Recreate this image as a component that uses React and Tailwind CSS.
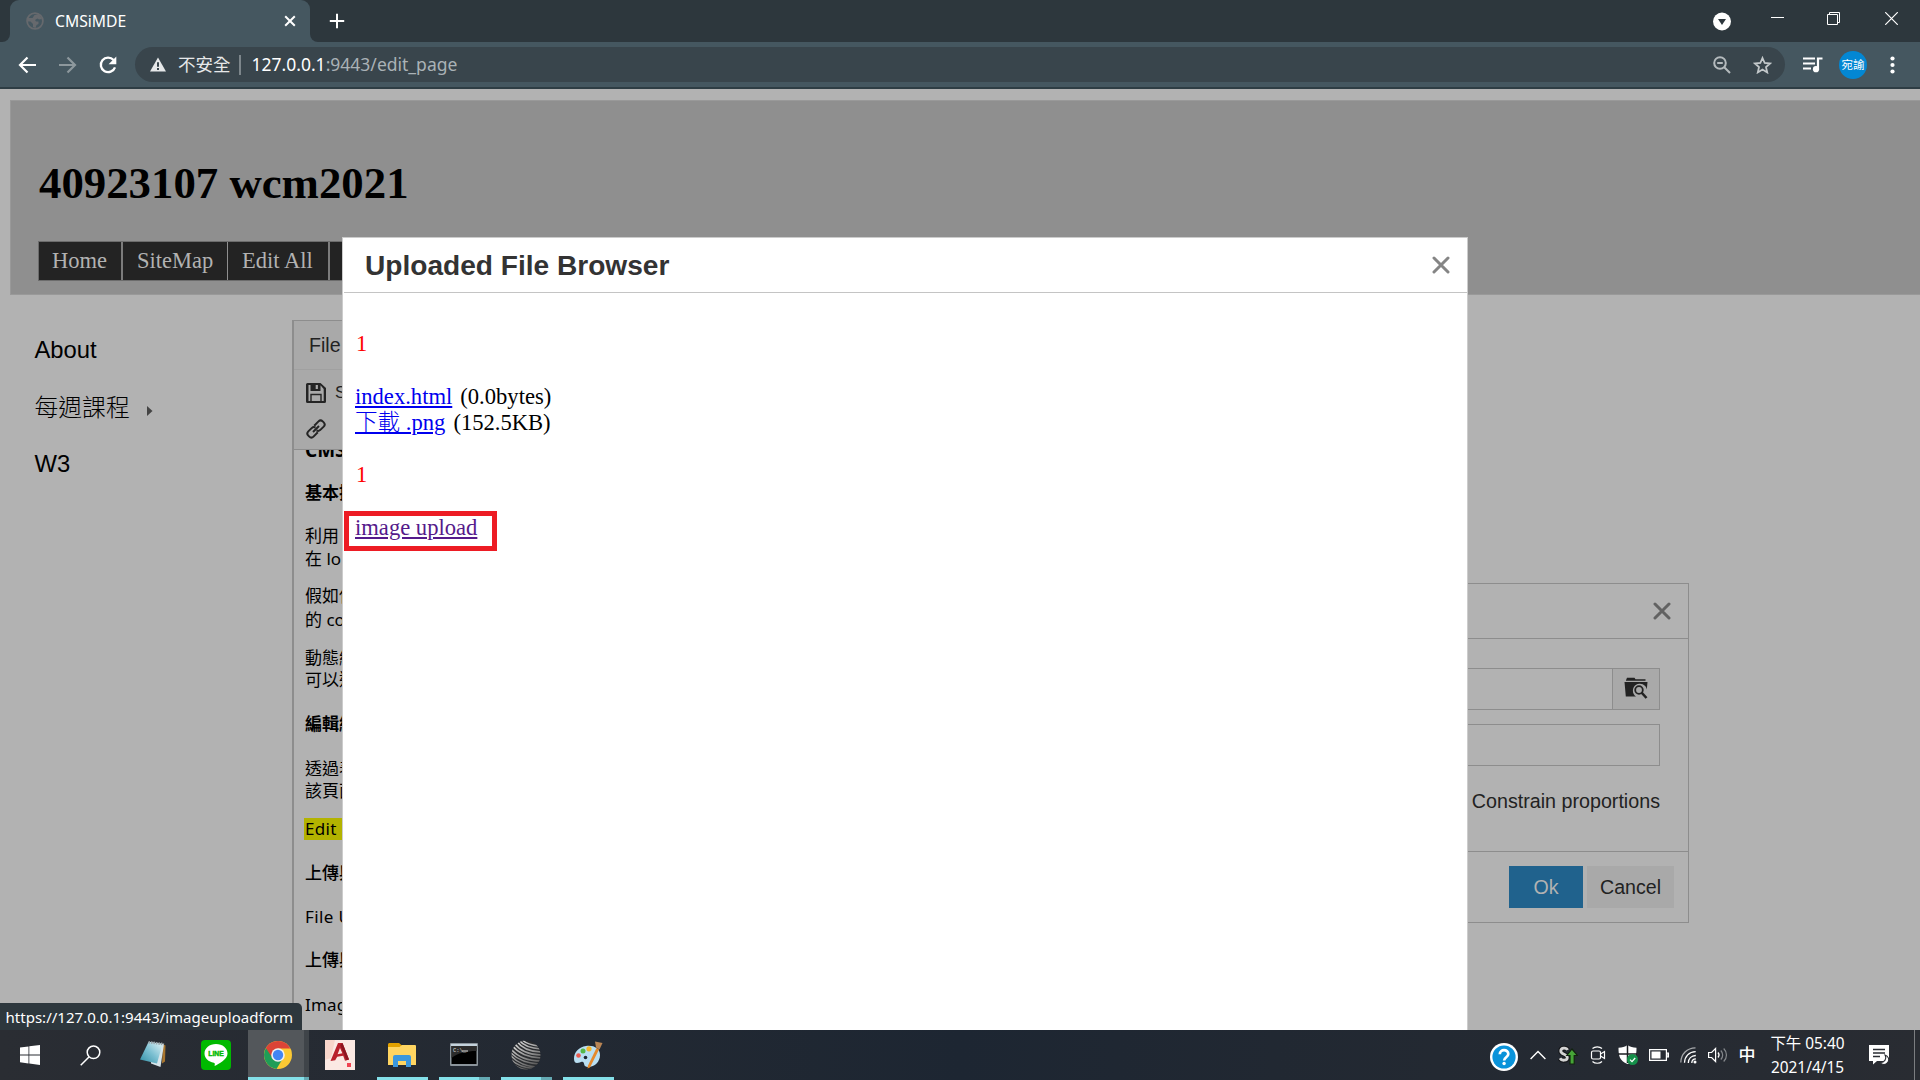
import React from "react";

function BrowserTabs() {
  return (
    <div className="flex h-[42px] items-start bg-[#2d373d]">
      <div className="flex h-[42px] w-[10px] shrink-0 items-end bg-[#455760]">
        <div className="h-full w-full rounded-br-[8px] bg-[#2d373d]" />
      </div>
      <div className="flex h-[42px] w-[300px] shrink-0 items-center rounded-t-[9px] bg-[#455760] pl-[16px] pr-[14px] text-white">
        <svg width="18" height="18" viewBox="0 0 18 18" fill="none">
          <circle cx="9" cy="9" r="7.9" stroke="#66696d" strokeWidth="1.8" />
          <path d="M2 6h4.500l2-3 4.500-1 3 5-3 .5-1.500-1L9 8l1 1.500h2.500v2.500l-2 1-1 3-2.500-1v-3L4.500 9.500H1.500z" fill="#66696d" />
        </svg>
        <span className='ml-[11px] text-[15.7px] leading-[22px] font-["Noto_Sans",sans-serif]'>CMSiMDE</span>
        <svg className="ml-auto" width="12" height="12" viewBox="0 0 12 12" stroke="#fff" strokeWidth="2">
          <path d="M1.200 1.200l9.600 9.600M10.800 1.200l-9.600 9.600" />
        </svg>
      </div>
      <div className="h-[42px] w-[10px] shrink-0 bg-[#455760]">
        <div className="h-full w-full rounded-bl-[8px] bg-[#2d373d]" />
      </div>
      <svg className="ml-[9px] mt-[13px]" width="16" height="16" viewBox="0 0 16 16" stroke="#fff" strokeWidth="2">
        <path d="M8 .8v14.400M.8 8h14.400" />
      </svg>
      <div className="ml-auto flex items-start pr-[22px]">
        <svg className="mt-[12px]" width="20" height="20" viewBox="0 0 20 20">
          <circle cx="10" cy="9.500" r="9" fill="#fff" />
          <path d="M6 7h8l-4 6z" fill="#2d373d" />
        </svg>
        <svg className="ml-[39px] mt-[12px]" width="13" height="13" viewBox="0 0 13 13" stroke="#fff">
          <path d="M0 5.500h13" />
        </svg>
        <svg className="ml-[43px] mt-[12px]" width="13" height="13" viewBox="0 0 13 13" fill="none" stroke="#fff">
          <path d="M.5 2.500h10v10H.5zM2.500 2.500v-2h10v10h-2" />
        </svg>
        <svg className="ml-[45px] mt-[12px]" width="13" height="13" viewBox="0 0 13 13" stroke="#fff" strokeWidth="1.200">
          <path d="M.2 .2l12.600 12.600M12.800 .2L.2 12.800" />
        </svg>
      </div>
    </div>
  );
}

function AddressBar() {
  return (
    <div className="flex h-[47px] items-start border-b-2 border-[#2e3d44] bg-[#455760] pt-[5px]">
      <div className="flex h-[35px] w-[135px] shrink-0 items-center pl-[18px]">
        <svg width="19" height="18" viewBox="0 0 19 18" fill="none" stroke="#fff" strokeWidth="2.200">
          <path d="M18 9H2.500M9.500 1.500L2 9l7.500 7.500" />
        </svg>
        <svg className="ml-[21px]" width="19" height="18" viewBox="0 0 19 18" fill="none" stroke="#8d989d" strokeWidth="2.200">
          <path d="M1 9h15.500M9.500 1.500L17 9l-7.500 7.500" />
        </svg>
        <svg className="ml-[21px]" width="20" height="20" viewBox="0 0 20 20">
          <path d="M15.600 5A7.300 7.300 0 1 0 17 12.300" fill="none" stroke="#fff" strokeWidth="2.300" />
          <path d="M18.300 1.500v7.700h-7.700z" fill="#fff" />
        </svg>
      </div>
      <div className='flex h-[35px] w-[1650px] shrink-0 items-center rounded-full bg-[#39454c] pl-[15px] pr-[14px] font-["Noto_Sans","Noto_Sans_CJK_TC",sans-serif]'>
        <svg width="16" height="15" viewBox="0 0 16 15">
          <path d="M8 .5l8 14H0z" fill="#e6e8e9" />
          <path d="M8 5.200v4.600M8 11v2" stroke="#39454c" strokeWidth="2" />
        </svg>
        <span className="mb-[2px] ml-[12px] text-[17.5px] leading-[26px] text-[#e6e8e9]">不安全</span>
        <span className="ml-[8px] h-[20px] w-[2px] bg-[#7d868b]" />
        <span className="mb-[2px] ml-[11px] text-[17.5px] leading-[26px] text-[#aab2b6]">
          <span className="text-white">127.0.0.1</span>:9443/edit_page
        </span>
        <svg className="ml-auto" width="18" height="18" viewBox="0 0 18 18" fill="none" stroke="#b4babd" strokeWidth="2">
          <circle cx="7" cy="7" r="5.800" />
          <path d="M11 11l6 6M4.200 7h5.600" />
        </svg>
        <svg className="ml-[22px] -mr-px" width="19" height="18" viewBox="0 0 19 18" fill="none" stroke="#c3c8ca" strokeWidth="1.800">
          <path d="M9.500 2l2.200 5 5.400.5-4.100 3.600 1.200 5.300-4.700-2.800-4.700 2.800L6 11.100 1.900 7.500 7.300 7z" />
        </svg>
      </div>
      <div className="flex h-[35px] flex-1 items-center pl-[18px]">
        <svg width="20" height="16" viewBox="0 0 20 16">
          <path d="M0 1.500h12M0 6.500h12M0 11.500h8" stroke="#fff" strokeWidth="2" />
          <path d="M15 12V1.500h4.500" fill="none" stroke="#fff" strokeWidth="2.200" />
          <circle cx="13" cy="12.200" r="3.100" fill="#fff" />
        </svg>
        <div className='ml-[16px] flex h-[28px] w-[28px] items-center justify-center rounded-full bg-[#0387d3] text-[11.5px] leading-none text-white font-["Noto_Sans_CJK_TC",sans-serif]'>
          宛諭
        </div>
        <svg className="ml-[23px]" width="5" height="18" viewBox="0 0 5 18" fill="#fff">
          <circle cx="2.500" cy="2.500" r="2.100" />
          <circle cx="2.500" cy="9" r="2.100" />
          <circle cx="2.500" cy="15.500" r="2.100" />
        </svg>
      </div>
    </div>
  );
}

function SiteHeader() {
  return (
    <header className='ml-[10px] h-[195px] border border-r-0 border-[#999] bg-[#8f8f8f] pl-[27px] pt-[56px] font-["Liberation_Serif",serif]'>
      <h1 className="pl-px text-[44.8px] font-bold leading-[52px] text-black">40923107 wcm2021</h1>
      <nav className="mt-[32px] flex h-[40px] w-[330px] overflow-hidden border-y border-l border-[#6c6c6c] bg-[#232323] text-[22.5px] leading-[38px] text-[#b2b2b2]">
        <a className="w-[84px] shrink-0 border-r-2 border-[#7c7c7c] pl-[13px]">Home</a>
        <a className="w-[105px] shrink-0 border-r border-[#8f8f8f] pl-[14px]">SiteMap</a>
        <a className="w-[102px] shrink-0 border-r-2 border-[#7c7c7c] pl-[14px]">Edit All</a>
      </nav>
    </header>
  );
}

const docLines = [
  { t: "基本操", c: "mt-[21px] font-bold" },
  { t: "利用", c: "mt-[21px]" },
  { t: "在 lo", c: "mt-[1px]" },
  { t: "假如使", c: "mt-[15px]" },
  { t: "的 co", c: "mt-[2px]" },
  { t: "動態網", c: "mt-[16px]" },
  { t: "可以透", c: "mt-0" },
  { t: "編輯網", c: "mt-[22px] font-bold" },
  { t: "透過表", c: "mt-[23px]" },
  { t: "該頁面", c: "mt-0" },
  { t: "Edit", c: "mt-[16px] -ml-px pl-px bg-[#b3b300] tracking-[0.3px]" },
  { t: "上傳與", c: "mt-[22px] font-medium" },
  { t: "File U", c: "mt-[22px] tracking-[0.4px]" },
  { t: "上傳與", c: "mt-[21px] font-medium" },
  { t: "Imag", c: "mt-[23px] tracking-[0.2px]" },
];

function Editor() {
  return (
    <section className='mt-[25px] flex w-[60px] flex-col overflow-hidden border-l-2 border-t-[1.5px] border-[#8d8d8d] text-[#222] font-["Liberation_Sans",Arial,sans-serif]'>
      <div className="h-[49px] shrink-0 whitespace-nowrap border-b border-[#a0a0a0] bg-[#a9a9a9] pl-[15px] text-[19.6px] leading-[49px]">
        File
      </div>
      <div className="h-[80px] shrink-0 border-b-[1.5px] border-[#8d8d8d] bg-[#a9a9a9] pl-[12px] pt-[12px]">
        <div className="flex h-[21px] items-center whitespace-nowrap text-[17px] leading-[21px]">
          <svg className="shrink-0" width="20" height="20" viewBox="0 0 20 20">
            <path d="M1.500 0h13L20 5v13.500A1.500 1.500 0 0 1 18.500 20h-17A1.500 1.500 0 0 1 0 18.500v-17A1.500 1.500 0 0 1 1.500 0z" fill="#242424" />
            <path d="M2.500 2v16h1.800v-7.200h11.400V18h2V6L14.500 2.300V8H4.500V2z" fill="#a9a9a9" />
            <path d="M5.500 0h8v7.300h-8z" fill="#242424" />
            <path d="M9.700 2h2.200v4H9.700zM5.700 12.200h8.600V18H5.700z" fill="#a9a9a9" />
          </svg>
          <span className="ml-[9px]">S</span>
        </div>
        <svg className="mt-[16px]" width="20" height="20" viewBox="0 0 20 20" fill="none" stroke="#242424" strokeWidth="2">
          <path d="M8.200 6.700l4.300-4.300a3 3 0 0 1 4.200 0l1 1a3 3 0 0 1 0 4.200l-3.600 3.500a3 3 0 0 1-3.600.3" />
          <path d="M11.800 13.300l-4.300 4.300a3 3 0 0 1-4.200 0l-1-1a3 3 0 0 1 0-4.200l3.600-3.500a3 3 0 0 1 3.600-.3" />
          <path d="M7 13l6-6" />
        </svg>
      </div>
      <div className='flex-1 overflow-hidden pl-[11px] text-[17px] text-black font-["Noto_Sans","Noto_Sans_CJK_TC",sans-serif]'>
        <div className="-mt-[11px] h-[22px] whitespace-nowrap text-[19px] font-bold leading-[22px]">CMS</div>
        {docLines.map((l, i) => (
          <div key={i} className={"h-[22px] whitespace-nowrap leading-[22px] " + l.c}>
            {l.t}
          </div>
        ))}
      </div>
    </section>
  );
}

function PageBody() {
  return (
    <div className="flex min-h-0 flex-1">
      <aside className='w-[292px] shrink-0 pl-[34.5px] pt-[41px] text-[23.8px] leading-[28px] text-black font-["Liberation_Sans","Noto_Sans_CJK_TC",sans-serif]'>
        <div>About</div>
        <div className="mt-[26px] flex h-[35px] items-center font-light">
          每週課程
          <svg className="ml-[17px] mt-[7px]" width="6" height="10" viewBox="0 0 6 10">
            <path d="M0 0l5.500 5L0 10z" fill="#444" />
          </svg>
        </div>
        <div className="mt-[25px]">W3</div>
      </aside>
      <Editor />
    </div>
  );
}

function CloseMark({ color }) {
  return (
    <svg className="shrink-0" width="18" height="18" viewBox="0 0 18 18" fill="none" stroke={color} strokeWidth="3" strokeLinecap="round">
      <path d="M2 2l14 14M16 2L2 16" />
    </svg>
  );
}

function ImageDialog() {
  return (
    <div className='absolute left-[1200px] top-[583px] flex h-[340px] w-[489px] flex-col border-[1.5px] border-[#8d8d8d] bg-[#b2b2b2] text-[19.6px] text-[#222] font-["Liberation_Sans",Arial,sans-serif]'>
      <div className="flex h-[55px] shrink-0 items-center justify-end border-b border-[#8d8d8d] pr-[17px]">
        <CloseMark color="#626262" />
      </div>
      <div className="flex flex-1 flex-col pl-[28px] pr-[28px] pt-[29px]">
        <div className="flex h-[42px] border border-[#8d8d8d]">
          <div className="flex-1" />
          <div className="flex w-[47px] items-center justify-center border-l border-[#8d8d8d] bg-[#a9a9a9] pb-[2px]">
            <svg width="24" height="23" viewBox="0 0 24 23">
              <path d="M2 3.200L3 .8h7.500l1 1.400h10v1.600H2zM.5 5h23l-.7 7.500A7 7 0 1 0 12 19.500H1.800z" fill="#222" />
              <circle cx="15" cy="13" r="3.800" fill="none" stroke="#222" strokeWidth="1.800" />
              <path d="M17.500 15.500l5 5.500" stroke="#222" strokeWidth="2.600" />
            </svg>
          </div>
        </div>
        <div className="mt-[14px] h-[42px] border border-[#8d8d8d]" />
        <div className="mt-[20px] text-right text-[19.7px] leading-[30px]">Constrain proportions</div>
      </div>
      <div className="flex h-[71px] shrink-0 justify-end gap-[4px] border-t-[1.5px] border-[#8d8d8d] pr-[14px] pt-[14px] leading-[42px]">
        <div className="h-[42px] w-[74px] bg-[#20628d] text-center text-[#b2b2b2]">Ok</div>
        <div className="h-[42px] w-[87px] bg-[#a9a9a9] text-center">Cancel</div>
      </div>
    </div>
  );
}

function FileBrowser() {
  return (
    <div className="absolute left-[342px] top-[237px] flex h-[793px] w-[1126px] flex-col border border-b-0 border-[#ccc] bg-white pl-px">
      <div className="flex h-[55px] shrink-0 items-center justify-between border-b border-[#c4c4c4] pl-[21px] pr-[17.5px]">
        <h2 className='pt-[2px] text-[28.1px] font-bold leading-[36px] text-[#333] font-["Liberation_Sans",Arial,sans-serif]'>
          Uploaded File Browser
        </h2>
        <CloseMark color="#858585" />
      </div>
      <div className='pl-[11px] pt-[38px] text-[22.6px] leading-[26px] text-black font-["Liberation_Serif","Noto_Sans_CJK_TC",serif]'>
        <p className="pl-px text-[#f00]">1</p>
        <p className="mt-[27px]">
          <a className="text-[#00e] underline">index.html</a>
          <span className="ml-[8px]">(0.0bytes)</span>
        </p>
        <p className="h-[26px]">
          <a className="font-light text-[#00e] underline">下載 .png</a>
          <span className="ml-[8px]">(152.5KB)</span>
        </p>
        <p className="mt-[26px] pl-px text-[#f00]">1</p>
        <p className="mt-[27px]">
          <a className="text-[#551a8b] underline">image upload</a>
        </p>
      </div>
      <div className="absolute left-[1px] top-[273px] h-[40px] w-[153px] border-[5px] border-[#ed1c24]" />
    </div>
  );
}

function TaskButton({ children, active, line, split }) {
  return (
    <div className="flex h-full w-[62px] shrink-0 flex-col items-center">
      <div className={"flex h-[47px] items-center justify-center " + (active ? "w-[61px] border-r-[5px] border-[#3f4449] bg-[#53575b]" : "w-[51px]")}>
        {children}
      </div>
      {line && (
        <div className={"flex h-[3px] bg-[#84e0e9] " + (active ? "w-[61px]" : "w-[51px]")}>
          {split && <div className={"ml-auto h-full bg-[#64a9b2] " + (active ? "w-[5px]" : "w-[11px]")} />}
        </div>
      )}
    </div>
  );
}

function Cell({ w, children }) {
  return (
    <div className="flex h-full shrink-0 items-center justify-center" style={{ width: w }}>
      {children}
    </div>
  );
}

function Taskbar() {
  return (
    <div className='flex h-[50px] shrink-0 items-center bg-linear-to-r from-[#2a2d33] via-[#1d2632] to-[#292c32] text-white font-["Noto_Sans","Noto_Sans_CJK_TC",sans-serif]'>
      <Cell w={60}>
        <svg width="20" height="20" viewBox="0 0 20 20" fill="#fff">
          <path d="M0 2.600l8.500-1.100v8H0zM9.300 1.300L20 0v9.500H9.300zM0 10.400h8.500v8L0 17.300zM9.300 10.400H20V20L9.300 18.600z" />
        </svg>
      </Cell>
      <Cell w={63}>
        <svg className="mr-[2px]" width="21" height="21" viewBox="0 0 21 21" fill="none" stroke="#fff" strokeWidth="1.500">
          <circle cx="13.500" cy="7.300" r="6.300" />
          <path d="M9 12L.7 20.300" />
        </svg>
      </Cell>
      <TaskButton>
        <svg className="mr-[2px]" width="30" height="28" viewBox="0 0 30 28">
          <defs>
            <linearGradient id="np" x1="0" y1="1" x2="1" y2="0">
              <stop offset="0" stopColor="#2f8da3" />
              <stop offset=".5" stopColor="#7cc0d2" />
              <stop offset="1" stopColor="#e5f4f7" />
            </linearGradient>
          </defs>
          <path d="M25 4l2.500 1.500-.5 16-3 2z" fill="#a9762f" />
          <path d="M12 2l14 2-3.500 23L13 23.500z" fill="#d7e5ea" />
          <path d="M10.500 2l14 2-5.500 19.500L2 19.500z" fill="url(#np)" />
          <path d="M10.500 2.200l15.500 2" stroke="#99a5aa" strokeWidth="2.500" strokeDasharray="1.500 1" />
        </svg>
      </TaskButton>
      <TaskButton>
        <svg className="mt-[3px]" width="30" height="30" viewBox="0 0 30 30">
          <rect width="30" height="30" rx="4" fill="#00b900" />
          <path d="M15 4C8.400 4 3.500 8.200 3.500 13.500c0 4.700 4 8.400 9.300 9.200 1.500.3 1 1.500.8 3.300 4-2 12.900-6.500 12.900-12.500C26.500 8.200 21.600 4 15 4z" fill="#fff" />
          <text x="15" y="16.400" textAnchor="middle" fontSize="6.800" fontWeight="bold" fill="#00b900" stroke="#00b900" strokeWidth=".4" fontFamily="Liberation Sans">LINE</text>
        </svg>
      </TaskButton>
      <TaskButton active line split>
        <svg className="ml-[4px] mt-[3px]" width="28" height="28" viewBox="0 0 28 28">
          <circle cx="14" cy="14" r="14" fill="#fbc934" />
          <path d="M14 14L1.900 7A14 14 0 0 0 12.500 27.900L18.500 18z" fill="#1f9d57" />
          <path d="M14 7.500h12.400A14 14 0 0 0 1.900 7l5.800 9z" fill="#db4437" />
          <circle cx="14" cy="14" r="6.800" fill="#f1f1f1" />
          <circle cx="14" cy="14" r="5.200" fill="#4285f4" />
        </svg>
      </TaskButton>
      <TaskButton>
        <svg className="mt-[3px]" width="30" height="30" viewBox="0 0 30 30">
          <rect width="30" height="30" fill="#fbe9e3" />
          <path d="M0 0h10L6 18 0 20z" fill="#f8d5ca" />
          <path d="M13 3h4.500l6.500 16.500-4 1.200-1.800-5-6 1-2 3.500-4.700.8zM15 8l-2.400 6.200 4.800-.9z" fill="#b9202b" />
          <path d="M17.500 3L24 19.500l-2.500.7L15.200 5z" fill="#8c1620" />
          <rect x="22" y="23" width="4" height="4" fill="#f04452" />
        </svg>
      </TaskButton>
      <TaskButton line>
        <svg className="mt-[3px]" width="28" height="24" viewBox="0 0 28 24">
          <path d="M0 1.500C0 .7.700 0 1.500 0H11l3 2.500V4H0z" fill="#e2a100" />
          <path d="M0 4h11.500L14 2h13a1 1 0 0 1 1 1v19H0z" fill="#ffd561" />
          <path d="M5 24V14a2 2 0 0 1 2-2h14a2 2 0 0 1 2 2v10h-5v-6h-8v6z" fill="#3b97dd" />
        </svg>
      </TaskButton>
      <TaskButton line split>
        <svg className="mt-[2px]" width="28" height="23" viewBox="0 0 28 23">
          <rect width="28" height="23" rx="1" fill="#8b949b" />
          <rect x="1" y="1" width="26" height="2" fill="#c4d2dc" />
          <rect x="1.500" y="3" width="25" height="18" fill="#000" />
          <path d="M1.500 3h25v5C16 8 8 10 1.500 15z" fill="#2b2b2b" />
          <text x="3" y="8.500" fontSize="5.500" fill="#ddd" fontFamily="Liberation Mono">C:\_</text>
          <path d="M12 8h6" stroke="#ddd" />
        </svg>
      </TaskButton>
      <TaskButton line split>
        <svg className="mt-[3px]" width="30" height="30" viewBox="0 0 30 30">
          <defs>
            <clipPath id="ball"><circle cx="15" cy="15" r="14.500" /></clipPath>
            <linearGradient id="bg" x1="0" y1="0" x2="0.6" y2="1">
              <stop offset="0" stopColor="#eee" />
              <stop offset="1" stopColor="#555" />
            </linearGradient>
          </defs>
          <g clipPath="url(#ball)">
            <rect width="30" height="30" fill="#2a2c2f" />
            <path
              d="M11 0q6 5 17 6M8 0q6 8 22 9M5.500 1q8 11 25 11M3 3q9 12 28 12M1 5.500q10 12 30 12.500M0 9q10 12 30 12M-1 12q10 11 29 12M-1 15q10 11 26 12M-1 18.500q8 9 24 10M-1 22q6 6 18 8"
              fill="none"
              stroke="url(#bg)"
              strokeWidth="1.500"
            />
          </g>
        </svg>
      </TaskButton>
      <TaskButton line>
        <svg className="mt-[3px]" width="30" height="30" viewBox="0 0 30 30">
          <path d="M13 6C6 7 1 12 1 18.500c0 3 1 4.500 3 4.500 3 0 4-2 6-1s0 5 5 5c7 0 12-5.500 12-12S21 5 13 6z" fill="#b9dff2" />
          <circle cx="5.500" cy="15.500" r="2.300" fill="#ea5a4e" />
          <circle cx="10" cy="11" r="2.500" fill="#55b848" />
          <circle cx="16" cy="8.800" r="2.600" fill="#f4b52b" />
          <circle cx="12.500" cy="17.500" r="1.800" fill="#1d2632" />
          <path d="M23.500 8l2.500 1.500L17 27.500l-2.500 1 .5-3z" fill="#e58a2c" />
          <path d="M22 1.500l7.500 1.500-3 6.500-3.500-2z" fill="#b98554" />
        </svg>
      </TaskButton>

      <div className="ml-auto flex h-full items-center">
        <Cell w={36}>
          <svg className="mt-[3px]" width="28" height="28" viewBox="0 0 28 28">
            <circle cx="14" cy="14" r="14" fill="#fff" />
            <circle cx="14" cy="14" r="11.600" fill="#0a93da" />
            <path d="M9.800 11.200c0-5.400 8.500-5.300 8.500-.2 0 3.200-4.200 3.300-4.200 6.500" fill="none" stroke="#fff" strokeWidth="2.700" />
            <circle cx="14.100" cy="20.500" r="1.700" fill="#fff" />
          </svg>
        </Cell>
        <Cell w={32}>
          <svg width="16" height="10" viewBox="0 0 16 10" fill="none" stroke="#fff" strokeWidth="1.400">
            <path d="M.6 9L8 1.500 15.400 9" />
          </svg>
        </Cell>
        <Cell w={28}>
          <svg width="20" height="20" viewBox="0 0 20 20">
            <path d="M9.500 5C8.500 2.500 2.800 2.300 2.800 6c0 4 6.500 2.500 6.500 6.500 0 3.500-5.800 3.500-7.300.8" fill="none" stroke="#15171a" strokeWidth="5" />
            <path d="M9.500 5C8.500 2.500 2.800 2.300 2.800 6c0 4 6.500 2.500 6.500 6.500 0 3.500-5.800 3.500-7.300.8" fill="none" stroke="#d4d4d4" strokeWidth="2.800" />
            <path d="M14 4l5.500 6.500h-3.300V19H12v-8.500H8.800z" fill="#46a537" stroke="#12240f" strokeWidth="1.200" />
          </svg>
        </Cell>
        <Cell w={32}>
          <svg width="16" height="18" viewBox="0 0 16 18" fill="none" stroke="#fff" strokeWidth="1.200">
            <rect x="1.500" y="5" width="9" height="8" rx="1.500" />
            <path d="M10.500 8l4-2.500v7l-4-2.500M2.500 2.500C5 .2 9.500.2 12 2.500M2.500 15.500c2.500 2.300 7 2.300 9.500 0" />
          </svg>
        </Cell>
        <Cell w={29}>
          <svg className="mr-px" width="20" height="20" viewBox="0 0 20 20">
            <path d="M9.500 0C7 2 4 2.700.5 2.700c0 8 1 13 9 16.300 8-3.300 9-8.300 9-16.300C15 2.700 12 2 9.500 0z" fill="#fff" />
            <path d="M9.500 0v18M0 9h19" stroke="#1b1e22" strokeWidth="1.500" />
            <circle cx="14.500" cy="14.500" r="5.500" fill="#15904a" />
            <path d="M12 14.600l2 2 3.200-3.600" fill="none" stroke="#fff" strokeWidth="1.300" />
          </svg>
        </Cell>
        <Cell w={31}>
          <svg width="20" height="12" viewBox="0 0 20 12">
            <path d="M.6.600h16.800v10.800H.6zM18 4h1.500v4H18z" fill="none" stroke="#fff" strokeWidth="1.200" />
            <path d="M2.500 2.500h9v7h-9z" fill="#fff" />
          </svg>
        </Cell>
        <Cell w={30}>
          <svg className="mr-px" width="17" height="17" viewBox="0 0 17 17" fill="none" strokeWidth="1.300">
            <path d="M.8 15.500C1 7 7 1 15.500.8" stroke="#a6a8ab" />
            <path d="M4.500 15.800C4.700 9.300 9 4.800 15.700 4.600" stroke="#fff" />
            <path d="M8.300 15.900c.1-4.200 3-7.200 7.500-7.400" stroke="#fff" />
            <path d="M11.800 16c0-2.400 1.600-4 4.100-4.100" stroke="#fff" />
            <circle cx="15" cy="15" r="1.500" fill="#fff" stroke="none" />
          </svg>
        </Cell>
        <Cell w={29}>
          <svg className="mr-px" width="20" height="16" viewBox="0 0 20 16" fill="none" strokeWidth="1.200">
            <path d="M.6 5.500h3l4-4v13l-4-4h-3z" stroke="#fff" />
            <path d="M10 5.500c1.300 1.500 1.300 3.500 0 5" stroke="#fff" />
            <path d="M12.800 3.500c2.500 2.600 2.500 6.400 0 9M15.700 1.500c3.700 3.800 3.700 9.200 0 13" stroke="#85888c" />
          </svg>
        </Cell>
        <Cell w={28}>
          <span className="text-[17px] font-medium leading-[20px]">中</span>
        </Cell>
        <Cell w={93}>
          <div className="text-center text-[15.4px] leading-[23px]">
            <div>下午 05:40</div>
            <div className="pt-px">2021/4/15</div>
          </div>
        </Cell>
        <Cell w={50}>
          <svg width="20" height="20" viewBox="0 0 20 20">
            <path d="M0 0h20v16H8l-4 3.500V16H0z" fill="#fff" />
            <path d="M4 4.500h12M4 8h12M4 11.500h7" stroke="#2a2d33" strokeWidth="1.300" />
            <path d="M16 10a5 5 0 0 1-5 7.500 4.800 4.800 0 1 0 5-7.500z" fill="#fff" stroke="#2a2d33" strokeWidth="1.100" />
          </svg>
        </Cell>
        <div className="ml-[10px] mr-[5px] h-full w-px bg-[#7b7d80]" />
      </div>
    </div>
  );
}

export default function App() {
  return (
    <div className="relative flex h-[1080px] w-[1920px] flex-col overflow-hidden bg-[#b2b2b2]">
      <BrowserTabs />
      <AddressBar />
      <main className="flex min-h-0 flex-1 flex-col overflow-hidden bg-[#b2b2b2] pt-[11px]">
        <SiteHeader />
        <PageBody />
      </main>
      <Taskbar />
      <ImageDialog />
      <FileBrowser />
      <div className='absolute left-0 top-[1003px] h-[27px] w-[302px] rounded-tr-[5px] bg-[#2d373d] pl-[5.5px] text-[15.05px] leading-[28px] text-white font-["Noto_Sans",sans-serif]'>
        https://127.0.0.1:9443/imageuploadform
      </div>
    </div>
  );
}
